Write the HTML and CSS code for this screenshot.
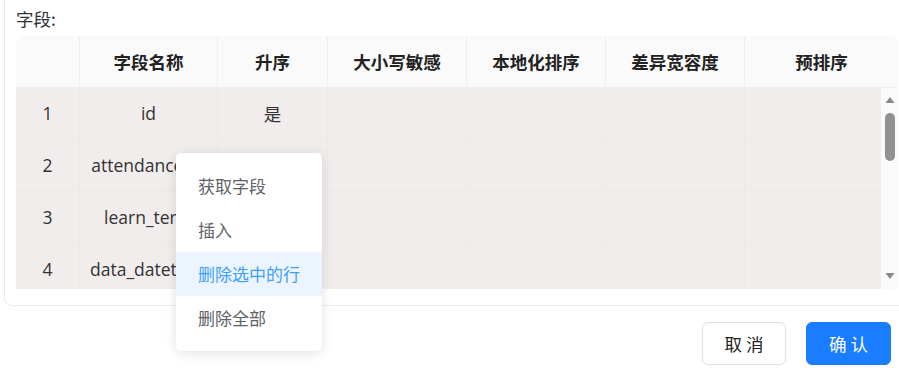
FILE: index.html
```html
<!DOCTYPE html>
<html lang="zh-CN">
<head>
    <meta charset="UTF-8">
    <meta name="viewport" content="width=device-width, initial-scale=1.0">
    <title>字段排序</title>
    <link rel="stylesheet" href="styles.css">
</head>
<body>

    <div class="page">
        <!-- Field panel -->
        <div class="panel">
            <div class="label">字段:</div>

            <div class="table">
                <div class="row head">
                    <div class="cell c-no"></div>
                    <div class="cell c-name">字段名称</div>
                    <div class="cell c-asc">升序</div>
                    <div class="cell c-w">大小写敏感</div>
                    <div class="cell c-w">本地化排序</div>
                    <div class="cell c-w">差异宽容度</div>
                    <div class="cell c-last">预排序</div>
                </div>

                <div class="body">
                    <div class="rows">
                        <div class="row">
                            <div class="cell c-no">1</div>
                            <div class="cell c-name">id</div>
                            <div class="cell c-asc">是</div>
                            <div class="cell c-w"></div>
                            <div class="cell c-w"></div>
                            <div class="cell c-w"></div>
                            <div class="cell c-rest"></div>
                        </div>
                        <div class="row">
                            <div class="cell c-no">2</div>
                            <div class="cell c-name">attendance_st</div>
                            <div class="cell c-asc"></div>
                            <div class="cell c-w"></div>
                            <div class="cell c-w"></div>
                            <div class="cell c-w"></div>
                            <div class="cell c-rest"></div>
                        </div>
                        <div class="row">
                            <div class="cell c-no">3</div>
                            <div class="cell c-name">learn_term</div>
                            <div class="cell c-asc"></div>
                            <div class="cell c-w"></div>
                            <div class="cell c-w"></div>
                            <div class="cell c-w"></div>
                            <div class="cell c-rest"></div>
                        </div>
                        <div class="row">
                            <div class="cell c-no">4</div>
                            <div class="cell c-name">data_datetime</div>
                            <div class="cell c-asc"></div>
                            <div class="cell c-w"></div>
                            <div class="cell c-w"></div>
                            <div class="cell c-w"></div>
                            <div class="cell c-rest"></div>
                        </div>
                    </div>

                    <!-- Scrollbar -->
                    <div class="scrollbar">
                        <svg class="arrow" width="10" height="8" viewBox="0 0 10 8"><path d="M5 1 L9.5 7 L0.5 7 Z" fill="#8a8a8a"/></svg>
                        <div class="thumb"></div>
                        <div class="spacer"></div>
                        <svg class="arrow" width="10" height="8" viewBox="0 0 10 8"><path d="M0.5 1 L9.5 1 L5 7 Z" fill="#8a8a8a"/></svg>
                    </div>
                </div>
            </div>
        </div>

        <!-- Footer buttons -->
        <div class="footer">
            <button class="btn">取 消</button>
            <button class="btn primary">确 认</button>
        </div>

        <!-- Context menu -->
        <ul class="menu">
            <li>获取字段</li>
            <li>插入</li>
            <li class="active">删除选中的行</li>
            <li>删除全部</li>
        </ul>
    </div>

</body>
</html>
```

FILE: styles.css
```css
/* Page */
body {
    margin: 0;
    background: #fff;
    font-family: "Open Sans", "Noto Sans CJK SC", sans-serif;
    color: #333;
}

.page {
    position: relative;
    width: 899px;
    height: 368px;
    overflow: hidden;
}

/* Panel */
.panel {
    width: 882px;
    margin: -12px 0 0 4px;
    padding: 18px 11px 16px 11px;
    border: 1px solid #ececec;
    border-radius: 8px;
}

.label {
    font-family: "Noto Sans CJK SC", sans-serif;
    font-size: 17.5px;
    line-height: 24px;
    color: #303133;
    margin: 0 0 5px 0;
}

/* Table */
.table {
    width: 882px;
}

.row {
    display: flex;
    height: 52px;
}

.cell {
    box-sizing: border-box;
    padding: 0 10px;
    line-height: 51px;
    font-size: 17.5px;
    text-align: center;
    white-space: nowrap;
    overflow: hidden;
    border-right: 1px solid #eee9e9;
    border-bottom: 1px solid #eee9e9;
}

.c-no { width: 64px; }
.c-name { width: 138px; }
.c-asc { width: 110px; }
.c-w { width: 139px; }
.c-last { flex: 1; border-right: none; }
.c-rest { flex: 1; border-right: none; }

.head {
    background: #fafafa;
    border-radius: 8px 8px 0 0;
}

.head .cell {
    font-family: "Noto Sans CJK SC", sans-serif;
    font-weight: bold;
    color: #222;
    border-color: #efefef;
}

.body {
    display: flex;
    height: 201px;
    overflow: hidden;
}

.rows {
    flex: 1;
    background: #f2eded;
}

.rows .cell {
    color: #333;
}

.rows .c-asc {
    font-family: "Noto Sans CJK SC", sans-serif;
}

/* Scrollbar */
.scrollbar {
    width: 17px;
    background: #fafafa;
    display: flex;
    flex-direction: column;
    align-items: center;
    padding: 8px 0 9px;
    box-sizing: border-box;
}

.thumb {
    width: 10px;
    height: 48px;
    margin-top: 9px;
    border-radius: 5px;
    background: #919191;
}

.spacer {
    flex: 1;
}

/* Footer */
.footer {
    display: flex;
    justify-content: flex-end;
    gap: 20px;
    padding: 16px 8px 0 0;
}

.btn {
    height: 43px;
    width: 84px;
    border: 1px solid #dcdfe6;
    border-radius: 6px;
    background: #fff;
    color: #222;
    font-family: "Noto Sans CJK SC", sans-serif;
    font-size: 17.5px;
}

.btn.primary {
    width: 85px;
    border-color: #1a7cff;
    background: #1a7cff;
    color: #fff;
}

/* Context Menu */
.menu {
    position: absolute;
    left: 176px;
    top: 153px;
    width: 146px;
    margin: 0;
    padding: 11px 0;
    list-style: none;
    background: #fff;
    border-radius: 5px;
    box-shadow: 0 2px 12px rgba(0, 0, 0, 0.12);
}

.menu li {
    height: 44px;
    line-height: 44px;
    padding-left: 22px;
    font-family: "Noto Sans CJK SC", sans-serif;
    font-size: 17px;
    color: #606266;
}

.menu li.active {
    background: #ecf5ff;
    color: #409eff;
}
```
